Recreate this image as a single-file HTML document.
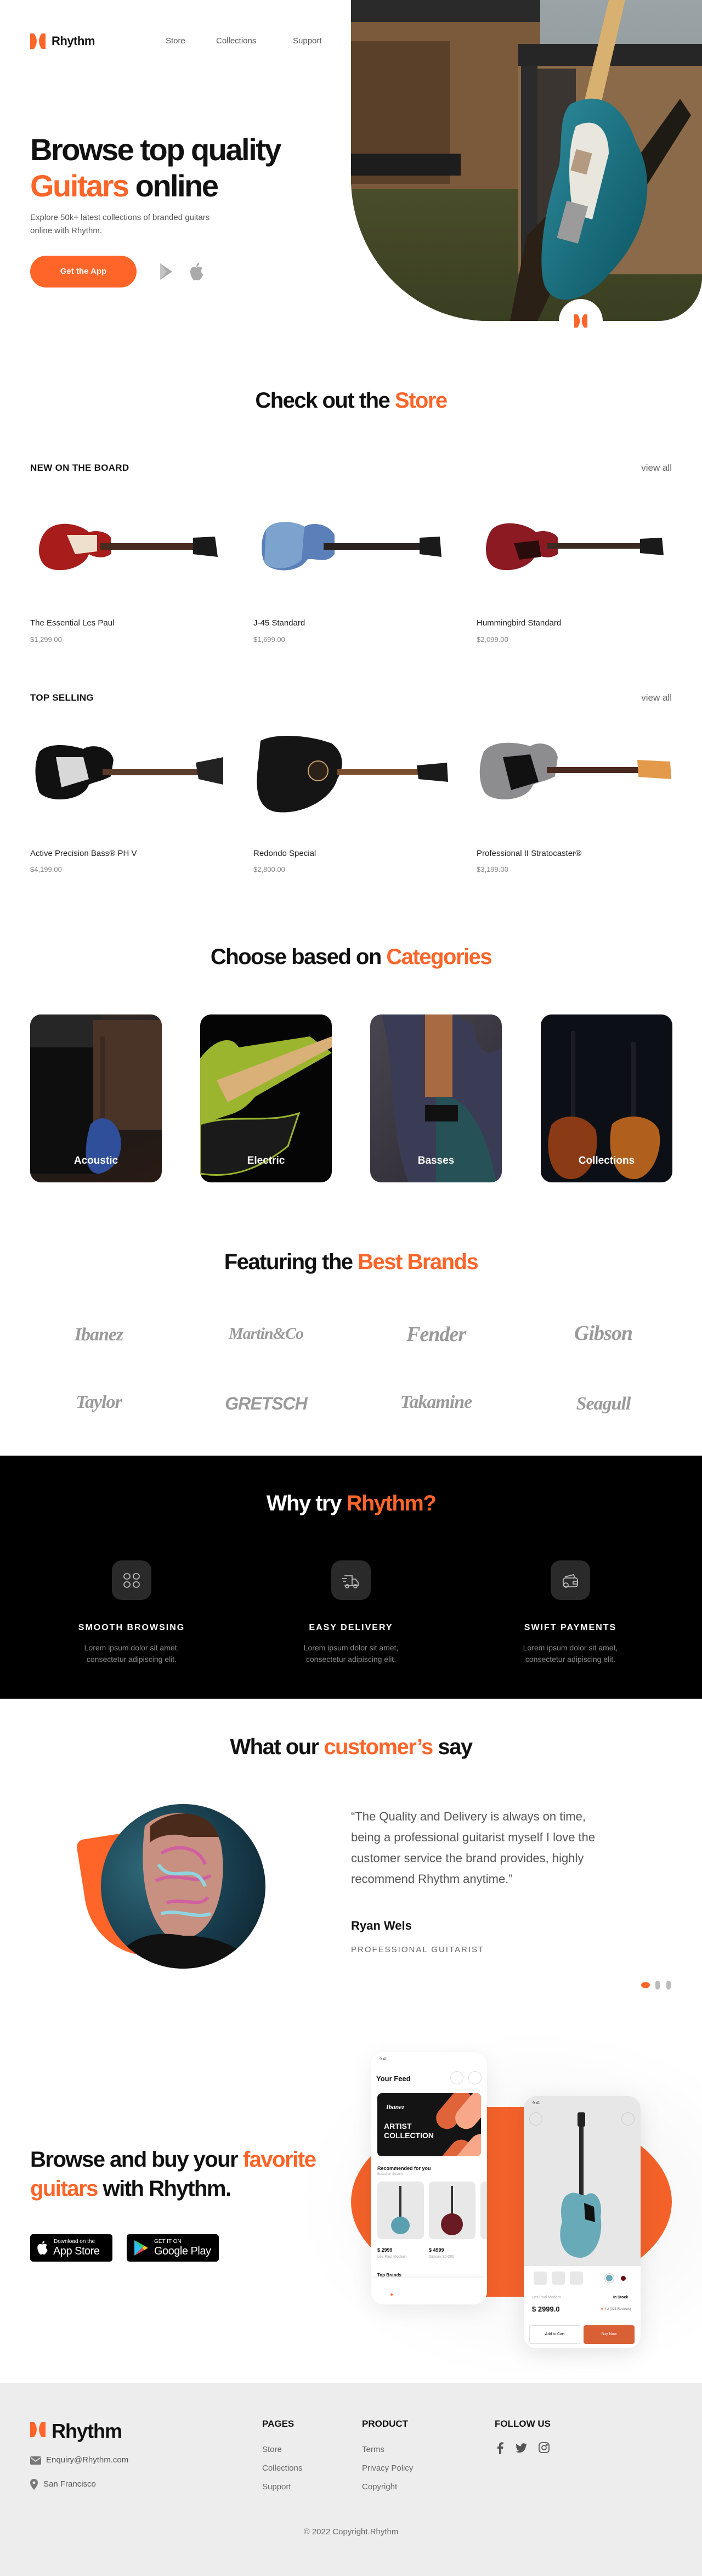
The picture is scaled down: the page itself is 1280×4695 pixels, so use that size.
<!DOCTYPE html>
<html><head><meta charset="utf-8">
<style>
*{margin:0;padding:0;box-sizing:border-box}
body{width:1280px;height:4695px;position:relative;background:#fff;font-family:"Liberation Sans",Arial,sans-serif;color:#111;overflow:hidden}
.a{position:absolute}
.or{color:#ff6428}
h2{position:absolute;left:0;width:1280px;text-align:center;font-size:40px;font-weight:700;letter-spacing:-1.5px}
.nav{font-size:15px;color:#555}
.lbl{font-size:17px;font-weight:700;letter-spacing:0.3px}
.va{font-size:17px;color:#666}
.pn{font-size:15px;color:#222}
.pp{font-size:13px;color:#888}
.card{position:absolute;width:240px;height:306px;border-radius:20px;overflow:hidden;top:1849px}
.card span{position:absolute;bottom:28px;left:0;width:100%;text-align:center;color:#fff;font-weight:700;font-size:19px}
.brand{position:absolute;width:200px;text-align:center;font-family:"Liberation Serif",serif;font-style:italic;font-weight:700;color:#9a9a9a;font-size:34px;letter-spacing:-1px}
.ib{position:absolute;width:72px;height:72px;border-radius:18px;background:#2a2a2a;top:2844px}
.ft{position:absolute;width:340px;text-align:center;color:#fff;font-weight:700;font-size:16px;letter-spacing:2px;top:2958px}
.fd{position:absolute;width:340px;text-align:center;color:#8a8a8a;font-size:14px;line-height:21px;top:2993px}
.fh{position:absolute;font-weight:700;font-size:17px;top:4408px}
.fl{position:absolute;font-size:15px;color:#666;line-height:34px;top:4448px}
</style></head><body>

<!-- HERO IMAGE -->
<div class="a" style="left:640px;top:0;width:640px;height:585px;overflow:hidden;border-radius:0 0 80px 250px / 0 0 80px 260px;background:#6e5a43">
<svg width="640" height="585" viewBox="0 0 640 585">
<defs>
<linearGradient id="sky" x1="0" y1="0" x2="0" y2="1"><stop offset="0" stop-color="#9aa3a6"/><stop offset="1" stop-color="#7d8584"/></linearGradient>
<linearGradient id="grass" x1="0" y1="0" x2="0" y2="1"><stop offset="0" stop-color="#4b4f2c"/><stop offset="1" stop-color="#3a3f22"/></linearGradient>
<linearGradient id="tl" x1="0" y1="0" x2="1" y2="1"><stop offset="0" stop-color="#2d8a9a"/><stop offset="1" stop-color="#0c5563"/></linearGradient>
</defs>
<rect width="640" height="585" fill="url(#sky)"/>
<rect y="300" width="640" height="285" fill="url(#grass)"/>
<!-- amp 1 -->
<rect x="0" y="0" width="345" height="345" fill="#7a5a3a"/>
<rect x="0" y="0" width="345" height="40" fill="#2a2a2a"/>
<rect x="0" y="75" width="180" height="260" fill="#5a4028"/>
<rect x="0" y="280" width="200" height="40" fill="#1d1d1d"/>
<!-- amp 2 -->
<rect x="305" y="80" width="335" height="420" fill="#8a6a48"/>
<rect x="305" y="80" width="335" height="40" fill="#262626"/>
<rect x="310" y="120" width="30" height="380" fill="#2b2b2b"/>
<rect x="340" y="125" width="70" height="300" fill="#3a3530"/>
<!-- strap -->
<path d="M320 430 L420 330 L470 360 L380 500 L340 585 L290 585Z" fill="#2b2016"/>
<path d="M470 360 L600 180 L620 210 L500 400Z" fill="#1e1a14"/>
<!-- neck -->
<path d="M470 0 L500 0 L430 300 L400 290Z" fill="#d8b070"/>
<!-- guitar body -->
<path d="M400 190 C460 160 500 200 520 260 C560 330 540 430 470 500 C420 560 360 560 350 510 C340 450 360 360 380 300 C385 250 380 210 400 190Z" fill="url(#tl)"/>
<path d="M410 230 C450 210 470 240 470 280 L440 400 L405 390 C395 330 395 270 410 230Z" fill="#e8e6dd"/>
<rect x="405" y="275" width="30" height="40" fill="#b59a82" transform="rotate(15 420 295)"/>
<rect x="385" y="370" width="40" height="70" fill="#9b9b9b" transform="rotate(15 405 400)"/>
</svg>
</div>
<div class="a" style="left:1019px;top:545px;width:80px;height:80px;border-radius:50%;background:#fff"></div>
<svg class="a" style="left:1047px;top:573px" width="24" height="24" viewBox="0 0 28 28"><path d="M0 0H7Q17 14 7 28H0Z" fill="#ff6428"/><path d="M28 0H21Q11 14 21 28H28Z" fill="#ff6428"/></svg>

<!-- HEADER -->
<svg class="a" style="left:55px;top:61px" width="28" height="28" viewBox="0 0 28 28"><path d="M0 0H7Q17 14 7 28H0Z" fill="#ff6428"/><path d="M28 0H21Q11 14 21 28H28Z" fill="#ff6428"/></svg>
<div class="a" style="left:94px;top:62px;font-size:22px;font-weight:700;letter-spacing:-0.5px">Rhythm</div>
<div class="a nav" style="left:302px;top:66px">Store</div>
<div class="a nav" style="left:394px;top:66px">Collections</div>
<div class="a nav" style="left:534px;top:66px">Support</div>

<div class="a" style="left:55px;top:240px;font-size:56px;font-weight:700;letter-spacing:-2.5px;line-height:66px">Browse top quality<br><span class="or">Guitars</span> online</div>
<div class="a" style="left:55px;top:385px;font-size:15px;color:#555;line-height:24px">Explore 50k+ latest collections of branded guitars<br>online with Rhythm.</div>
<div class="a" style="left:55px;top:466px;width:194px;height:58px;border-radius:29px;background:#ff6428;color:#fff;font-size:15px;font-weight:700;text-align:center;line-height:58px">Get the App</div>
<svg class="a" style="left:290px;top:478px" width="26" height="34" viewBox="0 0 26 34"><path d="M2 2L24 17L2 32Z" fill="#aaa"/><path d="M2 2L14 17L2 32Z" fill="#c4c4c4"/></svg>
<svg class="a" style="left:345px;top:478px" width="26" height="34" viewBox="0 0 26 34"><path d="M13 10C9 7 2 8 2 17C2 25 7 33 10 33C12 33 12 32 13 32C14 32 15 33 17 33C20 33 25 25 25 22C21 20 21 13 24 11C22 8 17 7 13 10Z" fill="#aaa"/><path d="M13 8C13 4 16 1 18 1C18 5 16 8 13 8Z" fill="#aaa"/></svg>

<!-- STORE -->
<h2 style="top:708px">Check out the <span class="or">Store</span></h2>
<div class="a lbl" style="left:55px;top:843px">NEW ON THE BOARD</div>
<div class="a va" style="right:55px;top:843px">view all</div>

<!-- row 1 guitars -->
<svg class="a" style="left:62px;top:930px" width="345" height="125" viewBox="0 0 345 125">
<path d="M20 40C40 15 85 25 100 40C115 35 135 40 140 50L140 80C125 90 110 85 100 80C90 110 30 120 15 95C5 80 8 55 20 40Z" fill="#a81c1c"/>
<path d="M60 45L115 45L115 75L75 80Z" fill="#eee0cc"/>
<rect x="120" y="60" width="175" height="12" fill="#4a2a1e"/>
<path d="M290 50L330 48L335 85L290 80Z" fill="#1a1a1a"/>
</svg>
<svg class="a" style="left:470px;top:930px" width="345" height="125" viewBox="0 0 345 125">
<path d="M15 35C30 15 70 20 85 30C100 20 130 25 140 45L140 80C125 100 100 85 90 90C75 115 25 115 12 95C5 80 5 50 15 35Z" fill="#5b7fb8"/>
<path d="M15 35C30 15 70 20 85 30L80 90C60 110 25 110 12 95Z" fill="#8ab2d6" opacity="0.7"/>
<rect x="120" y="60" width="180" height="12" fill="#2a2220"/>
<path d="M295 50L332 48L335 85L295 80Z" fill="#1a1a1a"/>
</svg>
<svg class="a" style="left:877px;top:930px" width="345" height="125" viewBox="0 0 345 125">
<path d="M20 35C40 15 85 25 100 40C115 35 135 40 140 50L140 80C125 90 110 85 100 80C90 110 30 120 15 95C5 80 8 50 20 35Z" fill="#8c1a22"/>
<path d="M60 60L105 55L110 85L70 90Z" fill="#2a0c0c"/>
<rect x="120" y="60" width="175" height="10" fill="#3a2a22"/>
<path d="M290 52L330 50L333 82L290 78Z" fill="#1a1a1a"/>
</svg>

<div class="a pn" style="left:55px;top:1127px">The Essential Les Paul</div>
<div class="a pn" style="left:462px;top:1127px">J-45 Standard</div>
<div class="a pn" style="left:869px;top:1127px">Hummingbird Standard</div>
<div class="a pp" style="left:55px;top:1158px">$1,299.00</div>
<div class="a pp" style="left:462px;top:1158px">$1,699.00</div>
<div class="a pp" style="left:869px;top:1158px">$2,099.00</div>

<div class="a lbl" style="left:55px;top:1262px">TOP SELLING</div>
<div class="a va" style="right:55px;top:1262px">view all</div>

<svg class="a" style="left:62px;top:1340px" width="350" height="130" viewBox="0 0 350 130">
<path d="M10 30C30 10 75 20 90 25C105 15 140 20 145 45L140 75C120 85 110 85 100 90C90 120 30 125 10 105C0 80 0 50 10 30Z" fill="#111"/>
<path d="M40 40L90 40L100 80L50 95Z" fill="#d8d8d8"/>
<rect x="125" y="62" width="175" height="11" fill="#5a3a2a"/>
<path d="M295 50L345 40L345 90L300 80Z" fill="#222"/>
</svg>
<svg class="a" style="left:465px;top:1340px" width="355" height="150" viewBox="0 0 355 150">
<path d="M10 10C40 -5 100 0 140 15C160 30 165 55 150 80C140 115 90 145 40 140C5 135 0 100 5 60Z" fill="#151515"/>
<circle cx="115" cy="65" r="18" fill="#2b2118" stroke="#c9a170" stroke-width="2"/>
<rect x="150" y="62" width="150" height="10" fill="#7a4e2d"/>
<path d="M295 55L350 50L352 85L298 80Z" fill="#1a1a1a"/>
</svg>
<svg class="a" style="left:872px;top:1340px" width="355" height="130" viewBox="0 0 355 130">
<path d="M10 30C30 5 80 15 95 20C110 10 140 15 145 40L140 75C120 85 110 85 100 90C90 120 30 125 12 105C0 85 0 55 10 30Z" fill="#8d8d8f"/>
<path d="M45 40L95 35L110 85L60 100Z" fill="#111"/>
<rect x="125" y="58" width="170" height="11" fill="#4a2a1e"/>
<path d="M290 45L350 48L352 80L292 76Z" fill="#e39a4a"/>
</svg>

<div class="a pn" style="left:55px;top:1547px">Active Precision Bass® PH V</div>
<div class="a pn" style="left:462px;top:1547px">Redondo Special</div>
<div class="a pn" style="left:869px;top:1547px">Professional II Stratocaster®</div>
<div class="a pp" style="left:55px;top:1577px">$4,199.00</div>
<div class="a pp" style="left:462px;top:1577px">$2,800.00</div>
<div class="a pp" style="left:869px;top:1577px">$3,199.00</div>

<!-- CATEGORIES -->
<h2 style="top:1722px">Choose based on <span class="or">Categories</span></h2>
<div class="card" style="left:55px;background:linear-gradient(160deg,#3a2e28,#1a1a1a 50%,#2a1a14)">
<svg width="240" height="306" viewBox="0 0 240 306"><rect x="0" y="0" width="130" height="60" fill="#262626"/><rect x="0" y="60" width="120" height="230" fill="#0e0e0e"/><rect x="115" y="10" width="125" height="200" fill="#4a3428"/><rect x="128" y="40" width="8" height="160" fill="#3a2a22"/><path d="M110 200C130 180 150 190 160 210C175 240 160 285 125 290C100 290 95 250 110 200Z" fill="#2f4f9a"/></svg><span>Acoustic</span></div>
<div class="card" style="left:365px;background:#050505">
<svg width="240" height="306" viewBox="0 0 240 306"><path d="M0 80C30 40 60 40 70 60L200 40L240 70L100 150C60 200 30 170 0 220Z" fill="#9bb52e"/><path d="M30 120L240 40L240 60L50 160Z" fill="#d8b078"/><path d="M0 200C60 180 120 200 180 180L160 240C110 280 60 300 0 290Z" fill="#1a1a1a" stroke="#9bb52e" stroke-width="3"/></svg><span>Electric</span></div>
<div class="card" style="left:675px;background:linear-gradient(135deg,#4a4650,#2a2830)">
<svg width="240" height="306" viewBox="0 0 240 306"><path d="M20 0C50 100 30 200 70 306L240 306L240 60C200 90 190 40 190 20L150 0Z" fill="#3a3c55"/><path d="M120 150C170 140 210 200 230 306H120Z" fill="#1d5a58" opacity="0.7"/><rect x="100" y="0" width="50" height="150" fill="#a86a40"/><rect x="100" y="165" width="60" height="30" fill="#111"/></svg><span>Basses</span></div>
<div class="card" style="left:986px;background:#0d0f16">
<svg width="240" height="306" viewBox="0 0 240 306"><rect x="55" y="30" width="8" height="170" fill="#1c1c24"/><rect x="165" y="50" width="8" height="150" fill="#1c1c24"/><path d="M20 200C40 180 80 180 100 210C110 250 90 300 55 300C15 300 5 240 20 200Z" fill="#8a3a14"/><path d="M130 200C150 180 200 180 215 210C225 250 200 300 170 300C130 300 120 240 130 200Z" fill="#b0601c"/></svg><span>Collections</span></div>

<!-- BRANDS -->
<h2 style="top:2278px">Featuring the <span class="or">Best Brands</span></h2>
<div class="brand" style="left:80px;top:2414px">Ibanez</div>
<div class="brand" style="left:385px;top:2414px;font-size:30px">Martin&amp;Co</div>
<div class="brand" style="left:695px;top:2410px;font-size:38px">Fender</div>
<div class="brand" style="left:1000px;top:2408px;font-size:38px">Gibson</div>
<div class="brand" style="left:80px;top:2537px">Taylor</div>
<div class="brand" style="left:385px;top:2540px;font-family:'Liberation Sans',sans-serif;font-size:32px">GRETSCH</div>
<div class="brand" style="left:695px;top:2537px">Takamine</div>
<div class="brand" style="left:1000px;top:2540px">Seagull</div>

<!-- WHY TRY -->
<div class="a" style="left:0;top:2653px;width:1280px;height:443px;background:#000"></div>
<h2 style="top:2718px;color:#fff">Why try <span class="or">Rhythm?</span></h2>
<div class="ib" style="left:204px"><svg width="72" height="72" viewBox="0 0 72 72" fill="none" stroke="#bbb" stroke-width="1.8"><rect x="22" y="24" width="11" height="10" rx="5"/><rect x="39" y="24" width="11" height="10" rx="5"/><rect x="22" y="39" width="11" height="10" rx="5"/><rect x="39" y="39" width="11" height="10" rx="5"/></svg></div>
<div class="ib" style="left:604px"><svg width="72" height="72" viewBox="0 0 72 72" fill="none" stroke="#bbb" stroke-width="1.8"><path d="M24 28H38V46H24M38 34H44L49 40V46H38"/><circle cx="29" cy="47" r="3"/><circle cx="44" cy="47" r="3"/><path d="M20 33H28M21 38H27"/></svg></div>
<div class="ib" style="left:1004px"><svg width="72" height="72" viewBox="0 0 72 72" fill="none" stroke="#bbb" stroke-width="1.8"><path d="M26 30L42 26L44 32"/><rect x="23" y="32" width="26" height="16" rx="4"/><path d="M41 38H49V43H41Z"/><circle cx="28" cy="45" r="4"/></svg></div>
<div class="ft" style="left:70px">SMOOTH BROWSING</div>
<div class="ft" style="left:470px">EASY DELIVERY</div>
<div class="ft" style="left:870px">SWIFT PAYMENTS</div>
<div class="fd" style="left:70px">Lorem ipsum dolor sit amet,<br>consectetur adipiscing elit.</div>
<div class="fd" style="left:470px">Lorem ipsum dolor sit amet,<br>consectetur adipiscing elit.</div>
<div class="fd" style="left:870px">Lorem ipsum dolor sit amet,<br>consectetur adipiscing elit.</div>

<!-- TESTIMONIAL -->
<h2 style="top:3162px">What our <span class="or">customer’s</span> say</h2>
<div class="a" style="left:155px;top:3340px;width:170px;height:230px;background:#ff6428;border-radius:14px 14px 14px 120px;transform:rotate(-9deg)"></div>
<div class="a" style="left:184px;top:3288px;width:300px;height:300px;border-radius:50%;overflow:hidden;background:radial-gradient(circle at 30% 40%,#2f6a7a,#163848 60%,#0e1e26)">
<svg width="300" height="300" viewBox="0 0 300 300"><path d="M80 40C120 0 210 10 220 80C230 150 210 220 170 240L120 240C80 200 70 120 80 40Z" fill="#c89080"/><path d="M90 40C130 5 200 10 215 60L160 60C130 50 100 60 90 70Z" fill="#4a2a1a"/><path d="M110 90C140 70 180 80 190 110M100 140C140 120 170 150 200 130M120 180C150 170 180 190 195 170" stroke="#d060a0" stroke-width="6" fill="none"/><path d="M105 110C130 150 170 100 190 150M110 200C140 190 170 210 200 200" stroke="#8fd4e0" stroke-width="6" fill="none"/><path d="M20 300C40 240 100 230 150 240C210 240 260 260 280 300Z" fill="#111"/></svg></div>
<div class="a" style="left:640px;top:3292px;font-size:22px;line-height:38px;color:#555;width:600px">“The Quality and Delivery is always on time,<br>being a professional guitarist myself I love the<br>customer service the brand provides, highly<br>recommend Rhythm anytime.”</div>
<div class="a" style="left:640px;top:3497px;font-size:22px;font-weight:700">Ryan Wels</div>
<div class="a" style="left:640px;top:3545px;font-size:15px;letter-spacing:2px;color:#666">PROFESSIONAL GUITARIST</div>
<div class="a" style="left:1169px;top:3613px;width:16px;height:10px;border-radius:5px;background:#ff6428"></div>
<div class="a" style="left:1195px;top:3610px;width:8px;height:16px;border-radius:4px;background:#bbb"></div>
<div class="a" style="left:1215px;top:3610px;width:8px;height:16px;border-radius:4px;background:#bbb"></div>

<!-- APP SECTION -->
<div class="a" style="left:540px;top:3700px;width:740px;height:640px;background:radial-gradient(ellipse at 60% 50%,#f2f2f2,#fff 70%)"></div>
<div class="a" style="left:55px;top:3910px;font-size:40px;font-weight:700;letter-spacing:-1.5px;line-height:53px">Browse and buy your <span class="or">favorite</span><br><span class="or">guitars</span> with Rhythm.</div>
<div class="a" style="left:55px;top:4072px;width:150px;height:50px;background:#000;border-radius:5px;color:#fff">
<svg class="a" style="left:11px;top:11px" width="22" height="27" viewBox="0 0 26 34"><path d="M13 10C9 7 2 8 2 17C2 25 7 33 10 33C12 33 12 32 13 32C14 32 15 33 17 33C20 33 25 25 25 22C21 20 21 13 24 11C22 8 17 7 13 10Z" fill="#fff"/><path d="M13 8C13 4 16 1 18 1C18 5 16 8 13 8Z" fill="#fff"/></svg>
<div class="a" style="left:43px;top:8px;font-size:10px">Download on the</div>
<div class="a" style="left:42px;top:20px;font-size:20px;letter-spacing:-0.5px">App Store</div></div>
<div class="a" style="left:231px;top:4072px;width:168px;height:50px;background:#000;border-radius:5px;color:#fff">
<svg class="a" style="left:12px;top:10px" width="28" height="30" viewBox="0 0 28 30"><path d="M2 1L16 15L2 29Z" fill="#2fc0f0"/><path d="M2 1L20 11L16 15Z" fill="#30d070"/><path d="M2 29L20 19L16 15Z" fill="#f04050"/><path d="M20 11L27 15L20 19L16 15Z" fill="#ffc820"/></svg>
<div class="a" style="left:50px;top:8px;font-size:10px">GET IT ON</div>
<div class="a" style="left:50px;top:20px;font-size:20px;letter-spacing:-0.5px">Google Play</div></div>

<!-- orange shape -->
<div class="a" style="left:640px;top:3840px;width:585px;height:346px;border-radius:50%;background:#f4622a"></div>
<div class="a" style="left:880px;top:3840px;width:90px;height:346px;background:#f4622a"></div>

<!-- phone 1 -->
<div class="a" style="left:676px;top:3740px;width:212px;height:460px;background:#fff;border-radius:24px;box-shadow:0 10px 40px rgba(0,0,0,0.08);overflow:hidden">
<div class="a" style="left:16px;top:10px;font-size:7px">9:41</div>
<div class="a" style="left:10px;top:41px;font-size:13px;font-weight:700">Your Feed</div>
<div class="a" style="left:145px;top:35px;width:24px;height:24px;border-radius:50%;border:1px solid #ddd"></div>
<div class="a" style="left:178px;top:35px;width:24px;height:24px;border-radius:50%;border:1px solid #ddd"></div>
<div class="a" style="left:12px;top:75px;width:189px;height:115px;background:#141414;border-radius:8px;overflow:hidden">
<div class="a" style="left:120px;top:-10px;width:40px;height:80px;border-radius:20px;background:#e0643a;transform:rotate(40deg)"></div>
<div class="a" style="left:155px;top:-10px;width:40px;height:80px;border-radius:20px;background:#f8a888;transform:rotate(40deg)"></div>
<div class="a" style="left:120px;top:80px;width:40px;height:80px;border-radius:20px;background:#e0643a;transform:rotate(40deg)"></div>
<div class="a" style="left:155px;top:70px;width:40px;height:80px;border-radius:20px;background:#f8a888;transform:rotate(40deg)"></div>
<div class="a" style="left:16px;top:18px;color:#fff;font-family:'Liberation Serif',serif;font-style:italic;font-weight:700;font-size:12px">Ibanez</div>
<div class="a" style="left:12px;top:52px;color:#fff;font-weight:900;font-size:14px;line-height:17px">ARTIST<br>COLLECTION</div></div>
<div class="a" style="left:12px;top:207px;font-size:9px;font-weight:700">Recommended for you</div>
<div class="a" style="left:12px;top:220px;font-size:6px;color:#aaa">Based on Search</div>
<div class="a" style="left:12px;top:236px;width:85px;height:105px;background:#e8e8e8;border-radius:8px"><svg width="85" height="105"><rect x="40" y="8" width="4" height="60" fill="#333"/><ellipse cx="42" cy="80" rx="17" ry="16" fill="#5aa0b0"/></svg></div>
<div class="a" style="left:106px;top:236px;width:85px;height:105px;background:#e8e8e8;border-radius:8px"><svg width="85" height="105"><rect x="40" y="8" width="4" height="55" fill="#333"/><ellipse cx="42" cy="78" rx="20" ry="20" fill="#6a1a22"/></svg></div>
<div class="a" style="left:200px;top:236px;width:20px;height:105px;background:#e8e8e8;border-radius:8px"></div>
<div class="a" style="left:12px;top:356px;font-size:9px;font-weight:700">$ 2999</div>
<div class="a" style="left:106px;top:356px;font-size:9px;font-weight:700">$ 4999</div>
<div class="a" style="left:12px;top:370px;font-size:7px;color:#aaa">Les Paul Modern</div>
<div class="a" style="left:106px;top:370px;font-size:7px;color:#aaa">Gibson SJ-200</div>
<div class="a" style="left:12px;top:402px;font-size:8px;font-weight:700">Top Brands</div>
<div class="a" style="left:0;top:412px;width:212px;height:48px;background:#fff;box-shadow:0 -3px 8px rgba(0,0,0,0.05)"></div>
<div class="a" style="left:36px;top:440px;width:4px;height:4px;border-radius:50%;background:#ff6428"></div>
</div>

<!-- phone 2 -->
<div class="a" style="left:955px;top:3820px;width:213px;height:460px;background:#fff;border-radius:24px;box-shadow:0 10px 40px rgba(0,0,0,0.1);overflow:hidden">
<div class="a" style="left:0;top:0;width:213px;height:310px;background:#e7e7e7"></div>
<div class="a" style="left:16px;top:10px;font-size:7px">9:41</div>
<div class="a" style="left:10px;top:30px;width:24px;height:24px;border-radius:50%;border:1px solid #ccc"></div>
<div class="a" style="left:178px;top:30px;width:24px;height:24px;border-radius:50%;border:1px solid #ccc"></div>
<svg class="a" style="left:50px;top:20px" width="110" height="280" viewBox="0 0 110 280"><rect x="48" y="10" width="14" height="26" rx="3" fill="#222"/><rect x="51" y="36" width="8" height="150" fill="#2a2a2a"/><path d="M30 160C45 150 55 165 65 160C80 150 95 170 90 200C95 230 85 270 55 275C20 275 10 240 20 210C15 185 20 165 30 160Z" fill="#68aab8"/><path d="M60 175L78 182L80 210L62 205Z" fill="#111"/></svg>
<div class="a" style="left:18px;top:320px;width:24px;height:24px;background:#e8e8e8;border-radius:4px"></div>
<div class="a" style="left:51px;top:320px;width:24px;height:24px;background:#e8e8e8;border-radius:4px"></div>
<div class="a" style="left:84px;top:320px;width:24px;height:24px;background:#e8e8e8;border-radius:4px"></div>
<div class="a" style="left:148px;top:324px;width:16px;height:16px;border-radius:50%;background:#68aab8;border:2px solid #fff;box-shadow:0 0 0 1px #ccc"></div>
<div class="a" style="left:177px;top:328px;width:9px;height:9px;border-radius:50%;background:#6a0a10"></div>
<div class="a" style="left:15px;top:364px;font-size:7px;color:#aaa">Les Paul Modern</div>
<div class="a" style="left:163px;top:364px;font-size:7px;font-weight:700">In Stock</div>
<div class="a" style="left:15px;top:381px;font-size:13px;font-weight:700">$ 2999.0</div>
<div class="a" style="left:140px;top:385px;font-size:6px;color:#777"><span class="or">★</span> 4.2 (321 Reviews)</div>
<div class="a" style="left:10px;top:418px;width:93px;height:34px;border:1px solid #ddd;border-radius:4px;font-size:7px;text-align:center;line-height:32px">Add to Cart</div>
<div class="a" style="left:109px;top:418px;width:93px;height:34px;background:#d95f35;border-radius:4px;font-size:7px;color:#fff;text-align:center;line-height:34px">Buy Now</div>
</div>

<!-- FOOTER -->
<div class="a" style="left:0;top:4343px;width:1280px;height:352px;background:#ededed"></div>
<svg class="a" style="left:55px;top:4414px" width="28" height="28" viewBox="0 0 28 28"><path d="M0 0H7Q17 14 7 28H0Z" fill="#ff6428"/><path d="M28 0H21Q11 14 21 28H28Z" fill="#ff6428"/></svg>
<div class="a" style="left:94px;top:4410px;font-size:36px;font-weight:700;letter-spacing:-1px">Rhythm</div>
<svg class="a" style="left:55px;top:4477px" width="20" height="15" viewBox="0 0 20 15"><rect width="20" height="15" rx="2" fill="#777"/><path d="M1 2L10 9L19 2" stroke="#ededed" stroke-width="1.6" fill="none"/></svg>
<div class="a" style="left:84px;top:4475px;font-size:15px;color:#555">Enquiry@Rhythm.com</div>
<svg class="a" style="left:55px;top:4518px" width="14" height="20" viewBox="0 0 14 20"><path d="M7 0C3 0 0 3 0 7C0 12 7 20 7 20C7 20 14 12 14 7C14 3 11 0 7 0Z" fill="#777"/><circle cx="7" cy="7" r="2.5" fill="#ededed"/></svg>
<div class="a" style="left:79px;top:4519px;font-size:15px;color:#555">San Francisco</div>
<div class="fh" style="left:478px">PAGES</div>
<div class="fh" style="left:660px">PRODUCT</div>
<div class="fh" style="left:902px">FOLLOW US</div>
<div class="fl" style="left:478px">Store<br>Collections<br>Support</div>
<div class="fl" style="left:660px">Terms<br>Privacy Policy<br>Copyright</div>
<svg class="a" style="left:906px;top:4451px" width="12" height="22" viewBox="0 0 12 22"><path d="M8 22V12H11L11.5 8H8V6C8 5 8.5 4 10 4H12V0.5C11 0.3 10 0.2 9 0.2C6 0.2 4 2 4 5V8H1V12H4V22Z" fill="#555"/></svg>
<svg class="a" style="left:941px;top:4453px" width="20" height="17" viewBox="0 0 24 20"><path d="M24 2.4C23 2.8 22 3.1 21 3.2C22 2.6 23 1.6 23.3 0.4C22.3 1 21.2 1.4 20 1.6C19 0.6 17.7 0 16.2 0C13.3 0 11 2.3 11 5.1C11 5.5 11 5.9 11.1 6.3C6.8 6.1 3 4 0.5 0.9C0 1.7 -0.2 2.5 -0.2 3.5C-0.2 5.3 0.7 6.9 2.1 7.8C1.3 7.8 0.5 7.5 -0.2 7.2C-0.2 9.7 1.6 11.8 3.9 12.3C3.1 12.5 2.2 12.5 1.5 12.4C2.1 14.4 4 15.9 6.3 16C4.5 17.4 2.3 18.2 -0.1 18.2H-1C1.3 19.6 4 20.4 6.9 20.4C16.2 20.4 21.4 12.6 21.4 5.8V5.2C22.4 4.4 23.3 3.5 24 2.4Z" fill="#555"/></svg>
<svg class="a" style="left:982px;top:4451px" width="20" height="20" viewBox="0 0 20 20" fill="none" stroke="#555" stroke-width="1.8"><rect x="1" y="1" width="18" height="18" rx="5"/><circle cx="10" cy="10" r="4"/><circle cx="15" cy="5" r="0.8" fill="#555"/></svg>
<div class="a" style="left:0;top:4606px;width:1280px;text-align:center;font-size:15px;color:#666">© 2022 Copyright.Rhythm</div>
</body></html>
